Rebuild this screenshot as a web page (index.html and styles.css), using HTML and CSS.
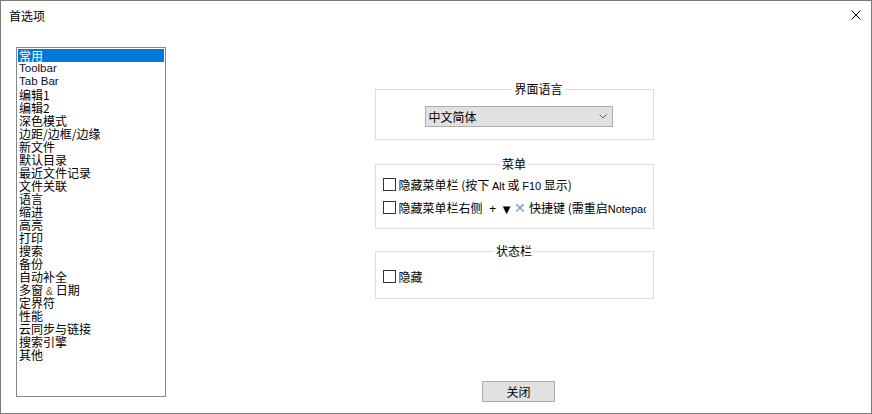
FILE: index.html
```html
<!DOCTYPE html>
<html lang="zh-CN">
<head>
<meta charset="utf-8">
<title>首选项</title>
<link rel="stylesheet" href="styles.css">
</head>
<body>
<div class="window">
  <div class="titlebar">
    <span class="title">首选项</span>
    <svg class="close-x" width="10" height="10" viewBox="0 0 10 10"><path d="M0.5 0.5 L9.5 9.5 M9.5 0.5 L0.5 9.5" stroke="#000" stroke-width="1" fill="none"/></svg>
  </div>
  <div class="main">
    <ul class="list">
      <li class="sel">常用</li>
      <li class="en">Toolbar</li>
      <li class="en">Tab Bar</li>
      <li>编辑1</li>
      <li>编辑2</li>
      <li>深色模式</li>
      <li>边距/边框/边缘</li>
      <li>新文件</li>
      <li>默认目录</li>
      <li>最近文件记录</li>
      <li>文件关联</li>
      <li>语言</li>
      <li>缩进</li>
      <li>高亮</li>
      <li>打印</li>
      <li>搜索</li>
      <li>备份</li>
      <li>自动补全</li>
      <li>多窗 <span class="amp">&amp;</span> 日期</li>
      <li>定界符</li>
      <li>性能</li>
      <li>云同步与链接</li>
      <li>搜索引擎</li>
      <li>其他</li>
    </ul>
    <div class="panel">
      <fieldset class="group g1">
        <legend>界面语言</legend>
        <div class="select">
          <span>中文简体</span>
          <svg width="8" height="5" viewBox="0 0 8 5"><path d="M0.5 0.5 L4 4 L7.5 0.5" stroke="#606060" stroke-width="1" fill="none"/></svg>
        </div>
      </fieldset>
      <fieldset class="group g2">
        <legend>菜单</legend>
        <div class="check"><span class="box"></span><span>隐藏菜单栏 (按下 <span class="en">Alt</span> 或 <span class="en">F10</span> 显示)</span></div>
        <div class="check"><span class="box"></span><span>隐藏菜单栏右侧<span class="sym"> &nbsp;+ &nbsp;<span class="tri">▼</span> <span class="xmark">✕</span> </span>快捷键 (需重启<span class="en">Notepad++</span>)</span></div>
      </fieldset>
      <fieldset class="group g3">
        <legend>状态栏</legend>
        <div class="check"><span class="box"></span><span>隐藏</span></div>
      </fieldset>
      <div class="btn">关闭</div>
    </div>
  </div>
</div>
</body>
</html>
```

FILE: styles.css
```css
html, body {
  margin: 0;
  padding: 0;
  background: #ffffff;
}

body {
  font-family: "Noto Sans CJK SC", "Liberation Sans", sans-serif;
  font-size: 12px;
  color: #000;
}

.window {
  width: 872px;
  height: 414px;
  box-sizing: border-box;
  border: 1px solid #7a7a7a;
  background: #fff;
  display: flex;
  flex-direction: column;
}

.titlebar {
  height: 30px;
  display: flex;
  align-items: center;
  justify-content: space-between;
  padding: 0 10px 0 8px;
  flex-shrink: 0;
}

.title {
  line-height: 14px;
}

.close-x {
  align-self: flex-start;
  margin-top: 9px;
}

.main {
  display: flex;
  padding: 16px 0 0 15px;
}

.list {
  list-style: none;
  margin: 0;
  padding: 1px;
  width: 150px;
  height: 350px;
  box-sizing: border-box;
  border: 1px solid #828790;
  flex-shrink: 0;
}

.list li {
  height: 13px;
  line-height: 13px;
  padding-left: 1px;
  white-space: nowrap;
}

.list li.sel {
  background: #0078d7;
  color: #fff;
}

.en {
  font-family: "Liberation Sans", sans-serif;
  font-size: 11px;
}

.list li.en {
  font-size: 11.5px;
  color: #0a0a30;
}

.amp {
  font-family: "Liberation Sans", sans-serif;
  font-size: 11px;
  color: #7a5a20;
}

.panel {
  flex: 1;
  display: flex;
  flex-direction: column;
  align-items: center;
  padding-top: 35px;
}

.group {
  width: 279px;
  box-sizing: border-box;
  margin: 0 0 0 -9px;
  border: 1px solid #dcdcdc;
  min-width: 0;
}

.group legend {
  margin: 0 auto;
  padding: 0 2px;
  line-height: 14px;
}

.g1 {
  padding: 10px 0 12px 49px;
}

.g2 {
  margin-top: 17px;
  padding: 5px 7px 12px 7px;
}

.g3 {
  margin-top: 15px;
  padding: 10px 7px 13px 7px;
}

.select {
  width: 188px;
  height: 21px;
  box-sizing: border-box;
  border: 1px solid #adadad;
  background: #e1e1e1;
  display: flex;
  align-items: center;
  justify-content: space-between;
  padding: 0 5px 0 3px;
}

.check {
  height: 17px;
  display: flex;
  align-items: center;
  gap: 3px;
  white-space: nowrap;
  overflow: hidden;
}

.g2 .check + .check {
  margin-top: 6px;
}

.box {
  width: 13px;
  height: 13px;
  box-sizing: border-box;
  border: 1px solid #333;
  background: #fff;
  flex-shrink: 0;
}

.sym {
  font-family: "Liberation Sans", sans-serif;
  font-size: 12px;
}

.tri {
  font-family: "DejaVu Sans", sans-serif;
  font-size: 10px;
}

.xmark {
  color: #6a9bd8;
  font-family: "DejaVu Sans", sans-serif;
  font-size: 14px;
}

.btn {
  margin-top: 82px;
  width: 73px;
  height: 21px;
  box-sizing: border-box;
  border: 1px solid #adadad;
  background: #e1e1e1;
  display: flex;
  align-items: center;
  justify-content: center;
}
```
